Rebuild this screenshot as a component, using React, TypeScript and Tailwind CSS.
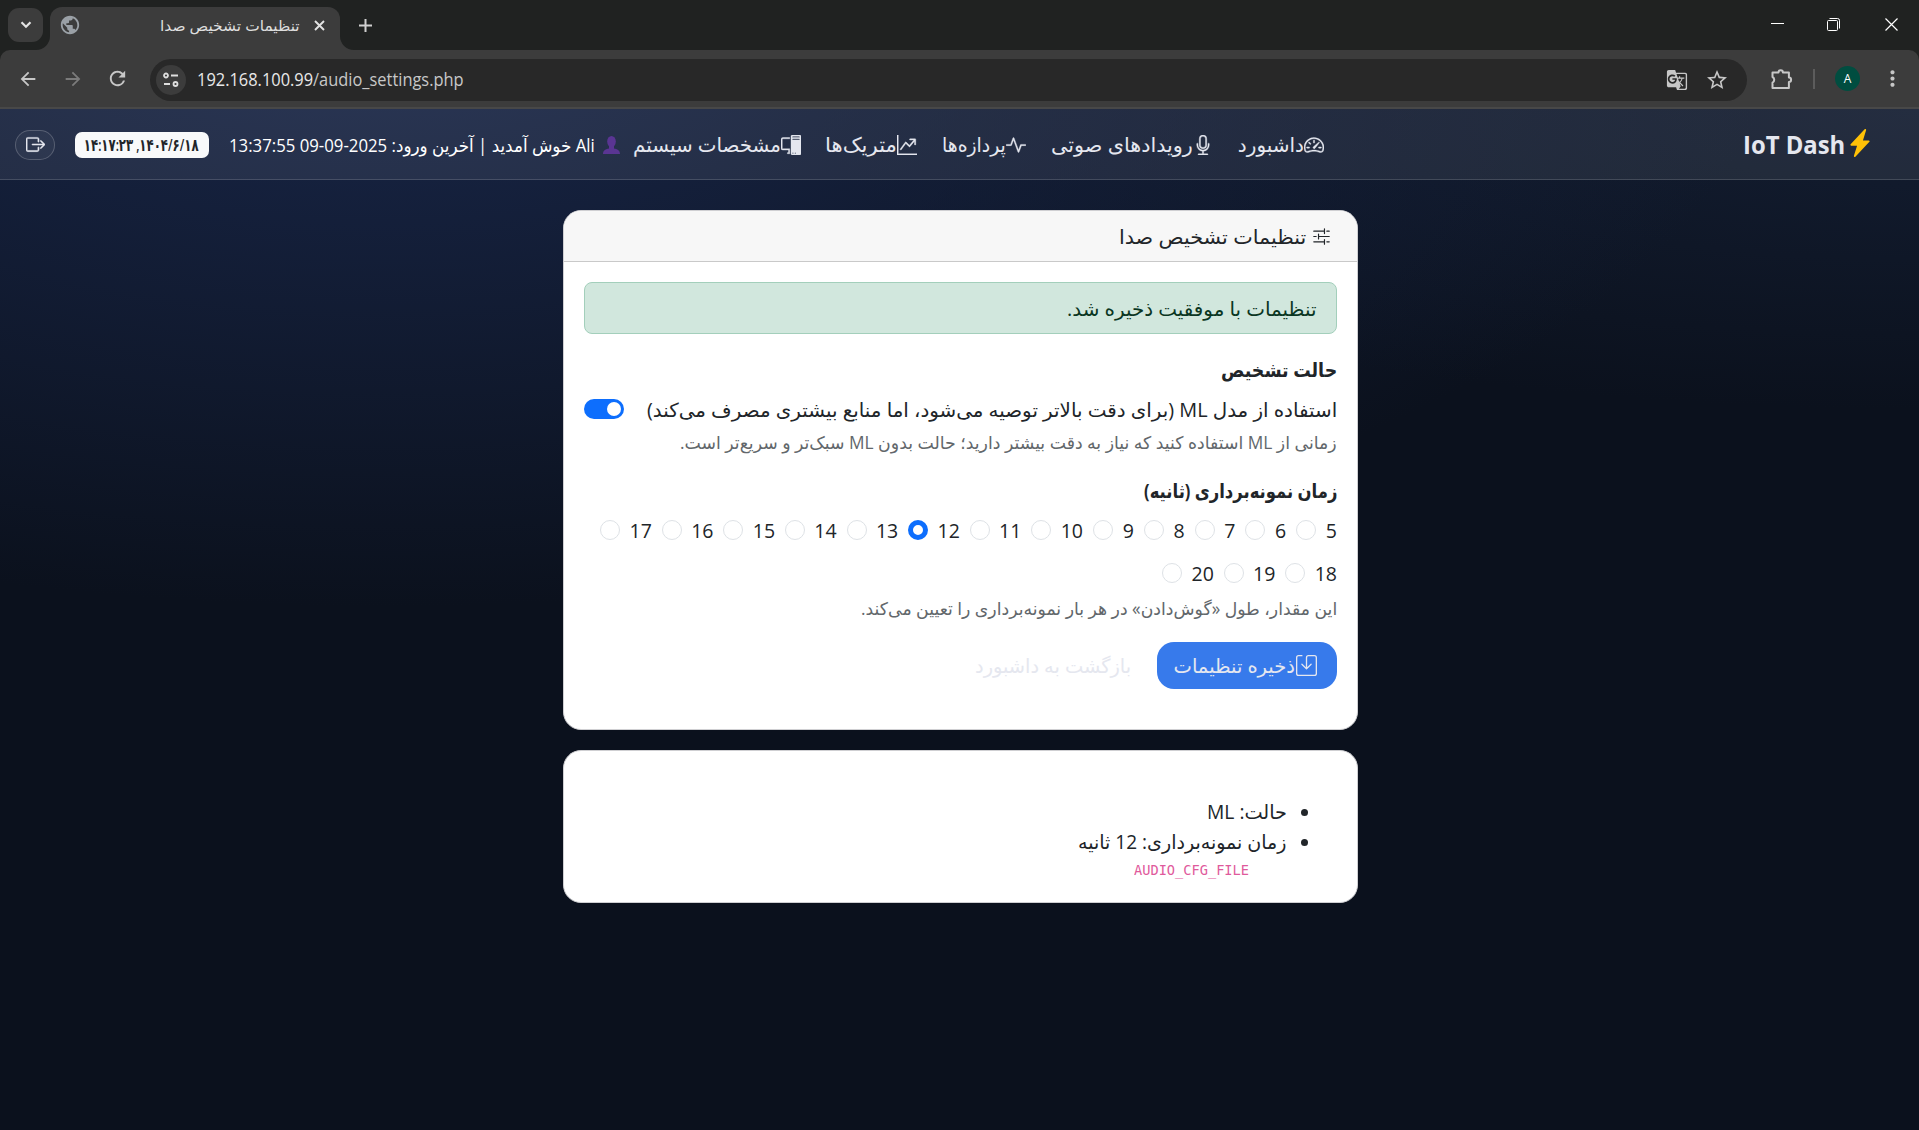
import React, { useLayoutEffect, useRef, useState } from "react";
import {
  BsSpeedometer2, BsMic, BsActivity, BsGraphUpArrow, BsPcDisplay, BsSliders2,
  BsSave, BsBoxArrowRight, BsLightningChargeFill,
} from "react-icons/bs";
import { MdArrowBack, MdArrowForward, MdRefresh, MdPublic, MdGTranslate, MdStarBorder, MdMoreVert } from "react-icons/md";

/* A single line of text that is condensed or widened to fill its box. */
function Fit({ className, children }: { className: string; children: React.ReactNode }) {
  const box = useRef<HTMLSpanElement>(null);
  const inner = useRef<HTMLSpanElement>(null);
  const [scale, setScale] = useState(1);
  useLayoutEffect(() => {
    if (box.current && inner.current) setScale(box.current.clientWidth / inner.current.offsetWidth);
  }, [children]);
  return (
    <span ref={box} className={"flex shrink-0 items-center justify-start whitespace-nowrap " + className}>
      <span ref={inner} className="block shrink-0 ltr:origin-left rtl:origin-right" style={{ transform: `scaleX(${scale})` }}>
        {children}
      </span>
    </span>
  );
}

function Chrome() {
  return (
    <header dir="ltr" className="bg-[#202221]">
      <div className="flex h-[50px] items-end">
        <div className="mb-2 ml-2 flex h-[34px] w-[35px] items-center justify-center rounded-[11px] bg-[#3c3c3c]">
          <svg width="12" height="8" viewBox="0 0 12 8" fill="none" stroke="#e3e3e3" strokeWidth="2.2"><path d="M1.5 1.2 6 5.7l4.500-4.500" /></svg>
        </div>
        <div className="relative ml-[7px] flex h-[43px] w-[290px] items-center rounded-t-[12px] bg-[#3c3c3c] pr-[15px] pl-[9px]">
          <svg className="absolute bottom-0 -left-[14px]" width="14" height="14"><path d="M14 0v14H0A14 14 0 0 0 14 0" fill="#3c3c3c" /></svg>
          <svg className="absolute -right-[14px] bottom-0" width="14" height="14"><path d="M0 0v14h14A14 14 0 0 1 0 0" fill="#3c3c3c" /></svg>
          <MdPublic className="mb-[7px] size-[22px] text-[#9aa0a6]" />
          <div dir="rtl" className="mb-[7px] ml-auto text-[15px] text-[#dedede]"><Fit className="h-6 w-[140px]">تنظیمات تشخیص صدا</Fit></div>
          <svg className="mb-[7px] ml-[14px]" width="11" height="11" viewBox="0 0 11 11" stroke="#e3e3e3" strokeWidth="1.900"><path d="m1 1 9 9M10 1l-9 9" /></svg>
        </div>
        <svg className="mb-[18px] ml-[19px]" width="13" height="13" viewBox="0 0 13 13" stroke="#d0d0d0" strokeWidth="2"><path d="M6.500 0v13M0 6.500h13" /></svg>
        <div className="mb-[19px] ml-auto flex items-center pr-[21px]">
          <svg width="13" height="13" viewBox="0 0 13 13" stroke="#fff"><path d="M0 5.500h13" /></svg>
          <svg className="ml-[43px]" width="13" height="13" viewBox="0 0 13 13" fill="none" stroke="#fff"><rect x=".5" y="2.500" width="10" height="10" rx="1" /><path d="M2.500 .5h8a2 2 0 0 1 2 2v8" /></svg>
          <svg className="ml-[45px]" width="13" height="13" viewBox="0 0 13 13" stroke="#fff" strokeWidth="1.200"><path d="m.5 .5 12 12M12.500 .5l-12 12" /></svg>
        </div>
      </div>
      <div className="flex h-[59px] items-center rounded-t-[10px] border-b-2 border-[#484848] bg-[#3c3c3c] text-[#c7c7c7]">
        <MdArrowBack className="ml-[17px] size-[22px]" />
        <MdArrowForward className="ml-[23px] size-[22px] text-[#7b7b7b]" />
        <MdRefresh className="ml-[22px] size-[23px]" />
        <div className="mt-[2px] ml-[21px] flex h-[42px] w-[1597px] items-center rounded-full bg-[#282828] pr-[18px] pl-[6px]">
          <div className="flex size-[30px] items-center justify-center rounded-full bg-[#3c3c3c]">
            <svg width="16" height="16" viewBox="0 0 16 16" fill="none" stroke="#dedede" strokeWidth="1.800"><circle cx="3" cy="3.500" r="2" /><path d="M8 3.500h7M1 12h6" /><circle cx="12.500" cy="12" r="2" /></svg>
          </div>
          <div className="ml-[11px] text-[18px] text-[#c7c7c7]"><Fit className="h-8 w-[267px]"><span className="text-[#e8e8e8]">192.168.100.99</span>/audio_settings.php</Fit></div>
          <MdGTranslate className="ml-auto size-[22px]" />
          <MdStarBorder className="ml-[17px] size-[24px]" />
        </div>
        <svg className="ml-[23px]" width="24" height="24" viewBox="0 0 24 24" fill="none" stroke="currentColor" strokeWidth="2" strokeLinejoin="round"><path d="M3.500 5.500h5a2.200 2.200 0 0 1 4.400 0h6v5a2.200 2.200 0 0 1 0 4.400v6H2.500v-5.200a3.200 3.200 0 0 0 0-5.700V5.500Z" /></svg>
        <div className="ml-[19px] h-5 w-[2px] bg-[#5c5c5c]" />
        <div className="ml-[20px] flex size-[25px] items-center justify-center rounded-full bg-[#004d40] text-[12px] text-white">A</div>
        <MdMoreVert className="ml-[20px] size-[25px]" />
      </div>
    </header>
  );
}

function NavLink({ icon: Icon, w, label, className = "" }: { icon: React.ComponentType<{ className?: string }>; w: string; label: string; className?: string }) {
  return (
    <a className={"flex items-center " + className}>
      <Icon className="size-5 [stroke-width:0.3]" />
      <Fit className={"h-8 " + w}>{label}</Fit>
    </a>
  );
}

function Navbar() {
  return (
    <nav className="flex h-[71px] items-center border-b border-white/15 bg-white/[0.075] pt-[2px] text-[20px] font-medium text-[#e5e7ef]">
      <BsLightningChargeFill className="mr-[45px] mb-1 h-[30px] w-[28px] text-[#ffc107]" />
      <div dir="ltr" className="mr-[6px] text-[25px] font-bold"><Fit className="h-8 w-[102px]">IoT Dash</Fit></div>
      <NavLink className="mr-[414px]" icon={BsSpeedometer2} w="w-[66px]" label="داشبورد" />
      <NavLink className="mr-[25px]" icon={BsMic} w="w-[142px]" label="رویدادهای صوتی" />
      <NavLink className="mr-[25px]" icon={BsActivity} w="w-[64px]" label="پردازه‌ها" />
      <NavLink className="mr-[25px]" icon={BsGraphUpArrow} w="w-[72px]" label="متریک‌ها" />
      <NavLink className="mr-[24px]" icon={BsPcDisplay} w="w-[148px]" label="مشخصات سیستم" />
      <svg className="mr-[13px]" width="17" height="18" viewBox="0 0 17 18" fill="#5a3593"><ellipse cx="8.500" cy="5.500" rx="4.300" ry="5.500" /><path d="M6 9h5v3.500c3 .5 6 1.500 6 5.500H0c0-4 3-5 6-5.500Z" /></svg>
      <div className="mr-[8px] text-[18px] font-normal text-white"><Fit className="h-8 w-[366px]">Ali خوش آمدید | آخرین ورود: 2025-09-09 13:37:55</Fit></div>
      <div className="mr-5 flex h-[26px] w-[134px] items-center rounded-[7px] bg-[#f8f9fa] pr-[10px] text-[17px] font-semibold text-[#212529]"><Fit className="h-6 w-[115px]">۱۴۰۴/۶/۱۸, ۱۴:۱۷:۲۳</Fit></div>
      <div className="mr-5 flex h-[30px] w-10 items-center justify-center rounded-full border border-white/20 bg-white/[0.04]"><BsBoxArrowRight className="mb-[2px] size-[19px] [stroke-width:0.4]" /></div>
    </nav>
  );
}

function Radio({ value, checked }: { value: number; checked: boolean }) {
  return (
    <label className={"ml-[10px] flex h-[43px] items-center justify-between " + (value < 10 ? "w-[40.8px]" : "w-[51.6px]")}>
      <Fit className={"mb-[2px] h-7 " + (value < 10 ? "w-[10.8px]" : "w-[21.6px]")}>{value}</Fit>
      <span className={"mb-[3px] size-5 rounded-full " + (checked ? "border-[5px] border-[#0d6efd]" : "border border-[#dee2e6]")} />
    </label>
  );
}

const seconds = Array.from({ length: 16 }, (_, i) => i + 5);

export default function App() {
  return (
    <div className="h-[1130px] overflow-hidden bg-[#0b111d] font-['Open_Sans','Noto_Sans','DejaVu_Sans',sans-serif]">
      <Chrome />
      <div dir="rtl" className="h-[1021px] bg-[radial-gradient(1400px_600px_at_20%_-10%,#19274a_0%,transparent_100%),radial-gradient(1100px_300px_at_100%_0%,#131d31_0%,transparent_100%)]">
        <Navbar />
        <main className="mr-[561px] w-[795px] pt-[30px] text-[19.5px] text-[#212529]">
          <section className="h-[520px] overflow-hidden rounded-[18px] border border-[#cfcfd2] bg-white">
            <div className="flex h-[51px] items-center border-b border-[#c9c9c9] bg-[#f7f7f7] pr-[26px]">
              <BsSliders2 className="size-[19px]" />
              <Fit className="mt-[2px] mr-[6px] h-8 w-[187px]">تنظیمات تشخیص صدا</Fit>
            </div>
            <div className="px-5 pt-5">
              <div className="flex h-[52px] items-center rounded-[8px] border border-[#a3cfbb] bg-[#d1e7dd] pt-[2px] pr-5 text-[#0a3622]"><Fit className="h-8 w-[249px]">تنظیمات با موفقیت ذخیره شد.</Fit></div>
              <div className="mt-[21px] font-bold"><Fit className="h-[30px] w-[116px]">حالت تشخیص</Fit></div>
              <div className="mt-[9px] flex h-[30px] items-center justify-between">
                <Fit className="mt-[2px] h-[30px] w-[690px]">استفاده از مدل ML (برای دقت بالاتر توصیه می‌شود، اما منابع بیشتری مصرف می‌کند)</Fit>
                <span className="flex h-5 w-10 items-center justify-start rounded-full bg-[#0d6efd] pr-[3px]"><span className="size-[14px] rounded-full bg-white" /></span>
              </div>
              <div className="mt-[5px] text-[17.5px] text-[#62676b]"><Fit className="h-[26px] w-[657px]">زمانی از ML استفاده کنید که نیاز به دقت بیشتر دارید؛ حالت بدون ML سبک‌تر و سریع‌تر است.</Fit></div>
              <div className="mt-[21px] font-bold"><Fit className="h-[30px] w-[193px]">زمان نمونه‌برداری (ثانیه)</Fit></div>
              <div className="mt-[4px] flex flex-wrap">{seconds.map((s) => <Radio key={s} value={s} checked={s === 12} />)}</div>
              <div className="-mt-px text-[17.5px] text-[#62676b]"><Fit className="h-[26px] w-[476px]">این مقدار، طول «گوش‌دادن» در هر بار نمونه‌برداری را تعیین می‌کند.</Fit></div>
              <div className="mt-[21px] flex items-center text-[#e5e7ef]">
                <button className="flex h-[47px] w-[180px] items-center rounded-[17px] bg-[#377aeb] pr-5"><BsSave className="size-[21px]" /><Fit className="mt-px mr-[1px] h-8 w-[121px]">ذخیره تنظیمات</Fit></button>
                <Fit className="mt-px mr-[26px] h-8 w-[156px]">بازگشت به داشبورد</Fit>
              </div>
            </div>
          </section>
          <section className="mt-5 h-[153px] rounded-[18px] border border-[#cfcfd2] bg-white pt-[46px] pr-[49px]">
            <div className="flex h-[30px] items-center"><span className="size-[7px] rounded-full bg-[#212529]" /><Fit className="mr-[14px] h-[30px] w-[80px]">حالت: ML</Fit></div>
            <div className="flex h-[30px] items-center"><span className="size-[7px] rounded-full bg-[#212529]" /><Fit className="mr-[14px] h-[30px] w-[209px]">زمان نمونه‌برداری: 12 ثانیه</Fit></div>
            <div className="flex pt-[1px] pr-[59px] font-['DejaVu_Sans_Mono',monospace] text-[14px] text-[#df5a9c]"><Fit className="h-6 w-[115px]">AUDIO_CFG_FILE</Fit></div>
          </section>
        </main>
      </div>
    </div>
  );
}
